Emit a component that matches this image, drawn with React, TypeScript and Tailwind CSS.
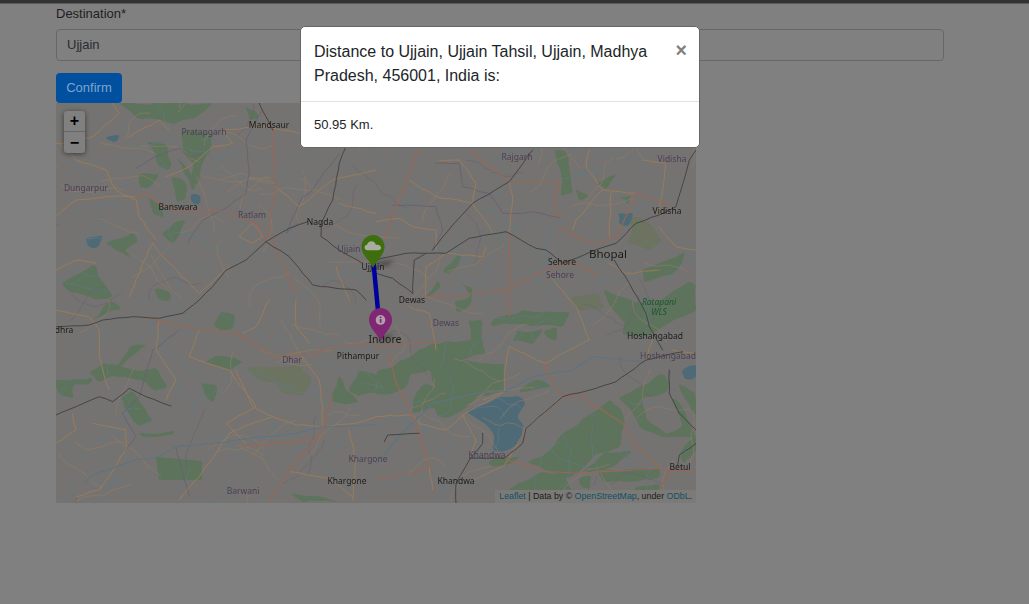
import React from "react";

type Z = [number, number];
const Z5: Z = [0, -3];
const Z6: Z = [320, 47];
const Z7: Z = [0, 197];
const Z8: Z = [320, 237];

function toPts(o: Z, pts: number[]) {
  const out: Z[] = [];
  for (let i = 0; i < pts.length; i += 2) out.push([o[0] + pts[i] / 3, o[1] + pts[i + 1] / 3]);
  return out;
}

function seeded(seed: number) {
  let s = seed;
  return () => {
    s = (s * 16807) % 2147483647;
    return s / 2147483647;
  };
}

// organic closed outline for land-cover areas
function blob(o: Z, pts: number[], seed: number) {
  const r = seeded(seed + 11);
  const p = toPts(o, pts);
  const rough: Z[] = [];
  p.forEach((a, i) => {
    const b = p[(i + 1) % p.length];
    const n = Math.max(1, Math.round(Math.hypot(a[0] - b[0], a[1] - b[1]) / 7));
    for (let k = 0; k < n; k++) {
      const t = k / n;
      rough.push([a[0] + (b[0] - a[0]) * t + (r() - 0.5) * 3.2, a[1] + (b[1] - a[1]) * t + (r() - 0.5) * 3.2]);
    }
  });
  let s = "";
  rough.forEach((a, i) => {
    const b = rough[(i + 1) % rough.length];
    const mx = (a[0] + b[0]) / 2;
    const my = (a[1] + b[1]) / 2;
    if (i === 0) s += `M${mx.toFixed(1)} ${my.toFixed(1)}`;
    else s += `Q${a[0].toFixed(1)} ${a[1].toFixed(1)} ${mx.toFixed(1)} ${my.toFixed(1)}`;
  });
  const a = rough[0];
  const b = rough[1];
  return s + `Q${a[0].toFixed(1)} ${a[1].toFixed(1)} ${((a[0] + b[0]) / 2).toFixed(1)} ${((a[1] + b[1]) / 2).toFixed(1)}Z`;
}

// wobbling open line for roads, rivers and railways
function line(o: Z, pts: number[], seed: number, amp = 1.4) {
  const r = seeded(seed + 101);
  const p = toPts(o, pts);
  let s = `M${p[0][0].toFixed(1)} ${p[0][1].toFixed(1)}`;
  for (let i = 1; i < p.length; i++) {
    const a = p[i - 1];
    const b = p[i];
    const n = Math.max(1, Math.round(Math.hypot(a[0] - b[0], a[1] - b[1]) / 8));
    for (let k = 1; k <= n; k++) {
      const t = k / n;
      const j = k === n ? 0 : amp;
      s += `L${(a[0] + (b[0] - a[0]) * t + (r() - 0.5) * j).toFixed(1)} ${(a[1] + (b[1] - a[1]) * t + (r() - 0.5) * j).toFixed(1)}`;
    }
  }
  return s;
}

const forests: [Z, number[]][] = [
  [Z5, [190, 10, 470, 10, 440, 40, 400, 60, 340, 70, 300, 60, 240, 50]],
  [Z5, [380, 90, 470, 100, 470, 140, 440, 190, 430, 250, 405, 250, 415, 200, 380, 150]],
  [Z5, [275, 125, 330, 135, 345, 190, 340, 215, 310, 195]],
  [Z5, [365, 175, 400, 215, 425, 260, 405, 270, 385, 215]],
  [Z5, [250, 220, 315, 222, 285, 265, 248, 265]],
  [Z5, [350, 230, 390, 240, 395, 300, 365, 305]],
  [Z5, [282, 295, 320, 320, 325, 350, 295, 340]],
  [Z5, [320, 405, 370, 360, 390, 365, 350, 430]],
  [Z5, [150, 430, 240, 400, 245, 430, 205, 445, 228, 475, 180, 450]],
  [Z5, [20, 550, 120, 495, 130, 530, 170, 590, 140, 600, 40, 575]],
  [Z5, [570, 20, 600, 30, 605, 60, 580, 60]],
  [Z5, [300, 560, 340, 570, 345, 600, 305, 600]],
  [Z7, [110, 60, 160, 0, 195, 25, 130, 50]],
  [Z7, [0, 240, 105, 235, 105, 248, 50, 255, 50, 300, 0, 270]],
  [Z7, [100, 220, 140, 190, 200, 200, 250, 210, 300, 205, 335, 265, 300, 270, 250, 235, 170, 230, 130, 250]],
  [Z7, [185, 205, 240, 160, 270, 135, 225, 135, 190, 190]],
  [Z7, [200, 290, 230, 275, 290, 360, 245, 375, 205, 330]],
  [Z7, [250, 400, 350, 395, 350, 405, 260, 410]],
  [Z7, [445, 185, 480, 165, 530, 170, 560, 185, 520, 210, 470, 190]],
  [Z7, [475, 70, 495, 35, 535, 40, 530, 90, 490, 95]],
  [Z7, [440, 250, 485, 255, 470, 310, 440, 280]],
  [Z7, [830, 310, 830, 280, 850, 230, 870, 265, 905, 310]],
  [Z7, [880, 270, 910, 215, 960, 220, 960, 280, 905, 285]],
  [Z7, [705, 580, 800, 590, 850, 605, 740, 605]],
  [Z8, [0, 165, 0, 90, 50, 85, 60, 70, 170, 10, 320, 0, 330, 40, 250, 60, 385, 75, 385, 155, 310, 170, 270, 200, 215, 235, 180, 230, 180, 205, 110, 220, 115, 170, 145, 130, 180, 150, 160, 90, 100, 100, 100, 130, 50, 165]],
  [Z8, [455, 365, 515, 340, 555, 285, 660, 210, 700, 180, 745, 215, 735, 320, 660, 340, 610, 400, 570, 415]],
  [Z8, [730, 175, 860, 100, 880, 130, 870, 160, 800, 175, 810, 240, 870, 280, 920, 260, 890, 170, 920, 200, 960, 290, 930, 290, 860, 290, 790, 260, 760, 200]],
  [Z8, [620, 400, 690, 340, 770, 330, 720, 380]],
  [Z8, [670, 395, 850, 385, 850, 410, 780, 425, 680, 425]],
  [Z8, [395, 450, 500, 395, 570, 415, 590, 450]],
  [Z8, [610, 415, 650, 405, 640, 445, 615, 440]],
  [Z8, [780, 445, 850, 430, 850, 450, 780, 450]],
  [Z8, [910, 130, 960, 160, 960, 225, 925, 175]],
  [Z8, [915, 340, 960, 280, 960, 330, 920, 370]],
  [Z8, [430, 160, 480, 115, 525, 135, 470, 150]],
  [Z8, [340, 360, 430, 350, 400, 375, 350, 380]],
  [Z6, [685, 415, 780, 460, 860, 450, 940, 395, 960, 400, 960, 480, 860, 530, 820, 560, 735, 555, 745, 520, 700, 460]],
  [Z6, [445, 480, 580, 490, 560, 530, 420, 520, 340, 525, 350, 510]],
  [Z6, [430, 545, 500, 540, 470, 580, 410, 570]],
  [Z6, [505, 540, 540, 530, 545, 570, 515, 565]],
  [Z6, [280, 510, 320, 510, 320, 600, 285, 600]],
  [Z6, [240, 455, 285, 440, 250, 395, 290, 410, 285, 470, 240, 490]],
  [Z6, [205, 355, 255, 310, 250, 340, 215, 375]],
  [Z6, [150, 440, 190, 390, 195, 410, 160, 435]],
  [Z6, [540, 0, 575, 0, 580, 60, 590, 130, 555, 135, 560, 80, 545, 40]],
  [Z6, [600, 120, 645, 135, 610, 150]],
  [Z6, [660, 100, 720, 70, 690, 120]],
  [Z6, [730, 140, 770, 140, 755, 165]],
  [Z6, [800, 360, 930, 310, 900, 370, 800, 395]],
];

const lightForests: [Z, number[]][] = [
  [Z7, [570, 200, 650, 205, 730, 195, 770, 240, 740, 285, 680, 280, 655, 250, 590, 230]],
  [Z6, [585, 440, 670, 430, 690, 480, 600, 480]],
  [Z6, [750, 190, 820, 220, 860, 270, 820, 300, 750, 280, 770, 240]],
];

const water: [Z, number[]][] = [
  [Z8, [275, 215, 330, 190, 370, 170, 430, 170, 450, 190, 420, 230, 440, 260, 440, 300, 380, 340, 345, 330, 360, 290, 330, 250, 300, 235]],
  [Z6, [730, 185, 770, 190, 760, 230, 730, 225]],
  [Z5, [405, 285, 430, 280, 432, 310, 408, 312]],
  [Z5, [90, 415, 140, 405, 130, 445, 100, 440]],
  [Z5, [150, 112, 190, 105, 185, 125, 160, 125]],
  [Z8, [920, 90, 960, 70, 960, 120, 930, 120]],
];

const darkLines: [Z, number[]][] = [
  [Z5, [430, 600, 470, 560, 510, 510, 570, 480, 630, 425, 700, 385, 755, 365]],
  [Z5, [630, 425, 700, 470, 770, 555, 840, 565, 900, 570, 930, 600]],
  [Z5, [870, 140, 850, 190, 830, 300, 795, 370, 795, 410, 850, 450, 920, 490]],
  [Z5, [610, 10, 650, 90]],
  [Z6, [0, 330, 90, 310, 210, 310, 280, 265, 390, 245, 480, 295, 510, 300, 560, 340, 600, 325, 645, 305, 720, 280, 780, 220, 850, 195, 900, 170, 940, 30, 960, 0]],
  [Z6, [470, 0, 400, 95, 290, 160, 230, 225, 170, 300]],
  [Z6, [110, 430, 115, 330, 150, 310]],
  [Z6, [0, 370, 50, 385, 110, 430]],
  [Z6, [715, 330, 760, 400, 810, 490, 820, 530, 860, 600]],
  [Z7, [0, 345, 60, 320, 130, 290, 170, 305, 220, 265, 270, 290, 345, 318]],
  [Z7, [0, 80, 100, 75, 140, 60, 230, 50, 310, 55, 380, 40, 430, 0]],
  [Z8, [25, 305, 35, 285, 130, 280]],
  [Z8, [240, 490, 240, 430, 280, 360, 320, 310, 320, 280]],
  [Z8, [280, 355, 385, 355, 440, 310, 450, 265, 560, 170, 660, 145, 720, 125, 810, 60, 850, 50, 920, 35]],
  [Z8, [880, 90, 880, 160, 910, 220, 960, 270]],
  [Z8, [905, 375, 910, 345, 960, 310]],
];

const redLines: [Z, number[]][] = [
  [Z5, [650, 90, 660, 260, 635, 400, 720, 580]],
  [Z5, [510, 335, 600, 370, 630, 425]],
  [Z5, [240, 290, 270, 280, 320, 320, 400, 335, 500, 335]],
  [Z5, [610, 10, 650, 90]],
  [Z7, [270, 50, 430, 90, 540, 100, 660, 170, 750, 165, 840, 140, 960, 130]],
  [Z7, [830, 290, 800, 390, 700, 515, 640, 600]],
  [Z7, [560, 440, 800, 420]],
  [Z6, [150, 440, 350, 425, 400, 415, 520, 355, 600, 340, 660, 375]],
  [Z6, [400, 245, 400, 415, 400, 500]],
  [Z6, [280, 0, 400, 95, 555, 95]],
  [Z6, [555, 205, 535, 180, 540, 130, 555, 95]],
  [Z6, [555, 235, 640, 280, 720, 265, 780, 130, 880, 165]],
  [Z6, [130, 0, 90, 90, 40, 230, 0, 330]],
  [Z8, [40, 40, 60, 130, 110, 230, 160, 380, 110, 400, 0, 420]],
  [Z8, [505, 70, 515, 100, 560, 170, 620, 165, 640, 190, 680, 210, 740, 250, 770, 310, 850, 380, 880, 395, 960, 390]],
  [Z8, [385, 355, 430, 370, 520, 395, 600, 400, 850, 385]],
  [Z8, [885, 395, 850, 450]],
  [Z8, [0, 25, 40, 15, 180, 5]],
];

const orangeLines: [Z, number[]][] = [
  [Z5, [10, 130, 60, 180, 150, 210, 180, 270, 240, 300, 250, 350, 300, 420]],
  [Z5, [170, 10, 190, 40, 110, 110, 30, 130, 0, 130]],
  [Z5, [330, 230, 400, 200, 470, 140, 530, 130, 500, 90, 620, 80, 730, 100]],
  [Z5, [340, 90, 310, 60, 220, 110]],
  [Z5, [660, 260, 730, 320, 830, 240, 960, 210]],
  [Z5, [850, 310, 960, 340]],
  [Z5, [550, 410, 590, 370, 620, 410, 590, 430, 550, 410]],
  [Z5, [0, 350, 60, 300, 150, 290, 240, 290]],
  [Z5, [290, 430, 340, 490, 430, 580, 520, 500]],
  [Z5, [290, 430, 260, 490, 220, 590]],
  [Z5, [120, 490, 60, 480, 0, 510]],
  [Z5, [840, 500, 880, 600]],
  [Z7, [0, 30, 100, 50, 130, 90, 130, 170, 160, 270]],
  [Z7, [310, 60, 300, 150, 360, 240, 330, 300]],
  [Z7, [430, 90, 400, 170, 520, 210, 600, 320, 510, 370, 570, 430]],
  [Z7, [640, 0, 600, 80, 560, 100]],
  [Z7, [720, 0, 720, 80, 760, 130]],
  [Z7, [740, 170, 790, 240, 800, 320, 800, 380]],
  [Z7, [650, 350, 720, 375, 800, 380, 900, 370, 960, 350]],
  [Z7, [540, 210, 590, 320, 650, 350, 590, 370, 520, 400, 430, 530, 370, 600]],
  [Z7, [50, 340, 60, 390, 0, 430]],
  [Z7, [110, 370, 210, 390, 210, 450, 130, 570, 60, 590]],
  [Z7, [700, 515, 820, 535, 890, 590]],
  [Z7, [880, 390, 900, 480, 890, 600]],
  [Z6, [0, 215, 70, 205, 110, 230, 180, 240, 180, 300]],
  [Z6, [190, 30, 250, 30, 300, 100, 290, 160, 350, 250]],
  [Z6, [100, 90, 180, 140, 290, 160]],
  [Z6, [400, 95, 410, 140, 400, 245]],
  [Z6, [330, 290, 320, 320, 210, 310, 150, 350, 150, 440]],
  [Z6, [640, 0, 630, 50, 680, 120, 780, 130]],
  [Z6, [680, 120, 600, 210, 590, 240]],
  [Z6, [705, 130, 700, 260]],
  [Z6, [800, 30, 870, 40, 850, 190]],
  [Z6, [520, 375, 600, 470, 640, 570]],
  [Z6, [100, 470, 160, 490, 180, 600]],
  [Z6, [850, 230, 900, 290, 960, 300]],
  [Z6, [700, 340, 750, 370, 850, 360]],
  [Z8, [400, 20, 385, 100, 385, 155, 260, 225, 210, 270, 130, 250]],
  [Z8, [260, 225, 300, 300, 285, 350]],
  [Z8, [385, 155, 320, 180]],
  [Z8, [510, 70, 420, 30, 400, 20]],
  [Z8, [560, 170, 450, 265, 420, 320, 400, 355, 380, 380, 290, 420]],
  [Z8, [640, 0, 560, 40, 510, 70]],
  [Z8, [830, 0, 810, 60]],
  [Z8, [0, 230, 110, 225, 130, 250]],
  [Z8, [160, 380, 170, 450]],
  [Z8, [890, 30, 960, 40]],
];

const blueLines: [Z, number[]][] = [
  [Z7, [90, 545, 110, 525, 240, 480, 310, 470, 360, 440, 480, 430, 580, 415, 720, 400, 800, 380, 960, 375]],
  [Z8, [0, 375, 60, 300, 170, 190, 300, 160, 390, 155, 470, 110, 590, 90, 650, 50, 800, 65]],
];

const purpleLines: [Z, number[]][] = [
  [Z5, [395, 430, 440, 360, 500, 330, 570, 280, 580, 220, 570, 120, 620, 30]],
  [Z5, [240, 205, 300, 170, 370, 145, 400, 170, 440, 160]],
  [Z5, [730, 370, 690, 400, 740, 290, 760, 280, 850, 160]],
  [Z7, [210, 450, 240, 410, 200, 340, 250, 290, 290, 150, 320, 130, 370, 90]],
  [Z7, [360, 440, 370, 480, 400, 590]],
  [Z6, [180, 40, 250, 40, 260, 110, 340, 130, 380, 190, 440, 190, 470, 185, 555, 205]],
  [Z6, [50, 165, 180, 170, 200, 240, 170, 300]],
];

function walks(seed: number, count: number, steps: number, len: number) {
  const r = seeded(seed);
  const out: string[] = [];
  for (let i = 0; i < count; i++) {
    let x = r() * 640;
    let y = r() * 400;
    let a = r() * Math.PI * 2;
    let s = `M${x.toFixed(1)} ${y.toFixed(1)}`;
    for (let k = 0; k < steps; k++) {
      a += (r() - 0.5) * 1.2;
      const l = len * (0.5 + r());
      x += Math.cos(a) * l;
      y += Math.sin(a) * l;
      s += `L${x.toFixed(1)} ${y.toFixed(1)}`;
    }
    out.push(s);
  }
  return out;
}

const rivers = walks(12345, 190, 9, 5);
const minorRoads = walks(777, 90, 6, 9);
const boundaries = walks(4242, 22, 10, 6);

type L = [number, number, string, number];
const labels: L[] = [
  [213, 23, "Mandsaur", 8.5],
  [122, 105, "Banswara", 8.5],
  [264, 120, "Nagda", 8.5],
  [356, 198, "Dewas", 8.5],
  [552, 152, "Bhopal", 11.5],
  [506, 160, "Sehore", 8.5],
  [611, 109, "Vidisha", 8.5],
  [599, 234, "Hoshangabad", 8.5],
  [302, 254, "Pithampur", 8.5],
  [329, 237, "Indore", 10.5],
  [317, 165, "Ujjain", 8.5],
  [291, 379, "Khargone", 8.5],
  [400, 379, "Khandwa", 8.5],
  [624, 365, "Betul", 8.5],
  [8, 228, "dhra", 8.5],
];
const plabels: L[] = [
  [148, 30, "Pratapgarh", 8.5],
  [30, 86, "Dungarpur", 8.5],
  [196, 113, "Ratlam", 8.5],
  [293, 147, "Ujjain", 8.5],
  [461, 55, "Rajgarh", 8.5],
  [616, 57, "Vidisha", 8.5],
  [504, 173, "Sehore", 8.5],
  [390, 221, "Dewas", 8.5],
  [236, 258, "Dhar", 8.5],
  [312, 357, "Khargone", 8.5],
  [187, 389, "Barwani", 8.5],
  [431, 353, "Khandwa", 8.5],
  [612, 254, "Hoshangabad", 8.5],
];

function MapArt() {
  return (
    <svg viewBox="0 0 640 400" className="block h-full w-full blur-[0.35px] saturate-[0.75]" style={{ fontFamily: "'Noto Sans', sans-serif" }}>
      <rect width="640" height="400" fill="#757370" />
      {lightForests.map(([o, p], i) => (
        <path key={i} d={blob(o, p, i * 7 + 3)} fill="#6a745c" />
      ))}
      {forests.map(([o, p], i) => (
        <path key={i} d={blob(o, p, i * 13 + 5)} fill="#587556" />
      ))}
      <path d="M100 354L146 358L146 377L103 377Z" fill="#587556" />
      {water.map(([o, p], i) => (
        <path key={i} d={blob(o, p, i * 17 + 9)} fill="#466c7c" />
      ))}
      <g fill="none" strokeLinejoin="round" strokeLinecap="round">
        {rivers.map((s, i) => (
          <path key={i} d={s} stroke="#557c8a" strokeWidth="0.75" opacity="0.85" />
        ))}
        {boundaries.map((s, i) => (
          <path key={i} d={s} stroke="#6b6072" strokeWidth="0.7" opacity="0.8" />
        ))}
        {minorRoads.map((s, i) => (
          <path key={i} d={s} stroke="#957a5c" strokeWidth="0.8" opacity="0.85" />
        ))}
        {purpleLines.map(([o, p], i) => (
          <path key={i} d={line(o, p, i * 3 + 1)} stroke="#6a5f76" strokeWidth="0.9" />
        ))}
        {orangeLines.map(([o, p], i) => (
          <path key={i} d={line(o, p, i * 5 + 2)} stroke="#a37a4e" strokeWidth="1" />
        ))}
        {blueLines.map(([o, p], i) => (
          <path key={i} d={line(o, p, i + 4, 0.8)} stroke="#587586" strokeWidth="1.2" />
        ))}
        {redLines.map(([o, p], i) => (
          <path key={i} d={line(o, p, i * 7 + 6)} stroke="#a8634c" strokeWidth="1.1" />
        ))}
        {darkLines.map(([o, p], i) => (
          <path key={i} d={line(o, p, i * 11 + 8, 0.8)} stroke="#454543" strokeWidth="1" />
        ))}
      </g>
      {labels.map(([x, y, t, s], i) => (
        <text key={i} x={x} y={y} fontSize={s} fill="#1c1c1c" textAnchor="middle" dominantBaseline="middle">
          {t}
        </text>
      ))}
      {plabels.map(([x, y, t, s], i) => (
        <text key={i} x={x} y={y} fontSize={s} fill="#513c5a" textAnchor="middle" dominantBaseline="middle">
          {t}
        </text>
      ))}
      <text x="603" y="200" fontSize="8.5" fontStyle="italic" fill="#0f5a26" textAnchor="middle" dominantBaseline="middle">
        Ratapani
      </text>
      <text x="603" y="209.5" fontSize="8.5" fontStyle="italic" fill="#0f5a26" textAnchor="middle" dominantBaseline="middle">
        WLS
      </text>
    </svg>
  );
}

const PIN = "M12 0C5.2 0 0 5.2 0 12C0 20 8.5 26 12 33C15.5 26 24 20 24 12C24 5.2 18.8 0 12 0Z";

function Overlay() {
  return (
    <svg viewBox="0 0 640 400" className="absolute inset-0 h-full w-full">
      <defs>
        <filter id="sh" x="-50%" y="-50%" width="200%" height="200%">
          <feGaussianBlur stdDeviation="2" />
        </filter>
      </defs>
      <path d="M317.5 160L323 218" stroke="#00009c" strokeWidth="4.5" fill="none" />
      <path d="M317 160L338 157L332 163L319 163Z" fill="#222" opacity="0.5" filter="url(#sh)" />
      <path d="M323 235L338 230L333 236L326 238Z" fill="#222" opacity="0.5" filter="url(#sh)" />
      <g transform="translate(305.5 132) scale(0.96 0.99)">
        <path d={PIN} fill="#3f6e0e" />
        <path d="M6.5 15.5C4.4 15.5 3.2 14 3.2 12.6C3.2 11 4.4 9.9 5.8 9.8C6.3 7.8 8.2 6.4 10.4 6.4C12.7 6.4 14.5 7.9 15 10C15.4 9.8 15.9 9.7 16.5 9.8C18.8 10 20.4 11.4 20.4 13C20.4 14.5 19 15.5 17.4 15.5Z" fill="#a8ad9f" />
      </g>
      <g transform="translate(313 205) scale(0.96 0.99)">
        <path d={PIN} fill="#7f2772" />
        <circle cx="12" cy="12" r="5" fill="#b09fad" />
        <rect x="11.2" y="11.2" width="1.8" height="3.6" fill="#7f2772" />
        <rect x="11.2" y="8.6" width="1.8" height="1.6" fill="#7f2772" />
      </g>
    </svg>
  );
}

export default function App() {
  return (
    <div className="relative h-[604px] w-[1029px] overflow-hidden bg-[#808080] font-['Liberation_Sans',sans-serif] text-[13px] text-[#1a1c1e]">
      <div className="h-[4px] border-b border-[#5a5a5a] bg-[#333333]" />
      <div className="px-[56px]">
        <label className="mt-[1px] block text-[13px] leading-[17px] text-[#1f2122]">Destination*</label>
        <div className="mt-[7px] flex h-[32px] w-[888px] items-center rounded-[4px] border border-[#676767] bg-[#808080] pl-[10px] text-[#2a2d30]">
          Ujjain
        </div>
        <button className="mt-[12px] block h-[30px] w-[66px] rounded-[4px] bg-[#00509f] text-center text-[13px] text-[#7fa5cc]">
          Confirm
        </button>
        <div className="relative h-[400px] w-[640px] overflow-hidden">
          <MapArt />
          <Overlay />
          <div className="absolute left-[8px] top-[8px] w-[21px] overflow-hidden rounded-[3px] bg-[#808080] shadow-[0_1px_5px_rgba(0,0,0,0.5)]">
            <div className="flex h-[21px] items-center justify-center border-b border-[#666] text-[16px] font-bold leading-none text-black">+</div>
            <div className="flex h-[21px] items-center justify-center text-[16px] font-bold leading-none text-black">−</div>
          </div>
          <div className="absolute bottom-0 right-0 whitespace-nowrap bg-[#7b7a77] pl-[4px] pr-[4px] text-[8.8px] leading-[13px] text-[#1a1a1a]">
            <span className="text-[#0f4f68]">Leaflet</span> | Data by © <span className="text-[#0f4f68]">OpenStreetMap</span>, under <span className="text-[#0f4f68]">ODbL</span>.
          </div>
        </div>
      </div>
      <div className="absolute left-[300px] top-[26px] w-[400px] overflow-hidden rounded-[5px] border border-[#666] bg-white">
        <div className="flex items-start justify-between border-b border-[#dee2e6] pb-[13px] pl-[13px] pr-[12px] pt-[13px]">
          <h5 className="w-[345px] text-[16px] leading-[24px] text-[#212529]">
            Distance to Ujjain, Ujjain Tahsil, Ujjain, Madhya Pradesh, 456001, India is:
          </h5>
          <span className="text-[19.5px] font-bold leading-[20px] text-[#808080]">×</span>
        </div>
        <div className="px-[13px] pb-[13px] pt-[14px] leading-[18px] text-[#212529]">50.95 Km.</div>
      </div>
    </div>
  );
}
